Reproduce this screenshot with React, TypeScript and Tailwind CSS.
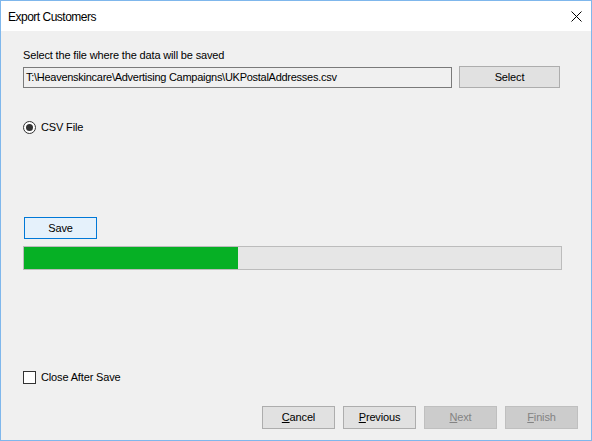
import React from 'react';

const font = { fontFamily: '"Liberation Sans", Arial, sans-serif' };

const WinButton: React.FC<{ label: string; mnemonic?: boolean; disabled?: boolean }> = ({ label, mnemonic, disabled }) => (
  <button
    className={
      disabled
        ? 'w-[73px] h-[23px] border border-[#bfbfbf] bg-[#cccccc] text-[#838383] text-[11px] tracking-[-0.15px] leading-none'
        : 'w-[73px] h-[23px] border border-[#adadad] bg-[#e1e1e1] text-black text-[11px] tracking-[-0.15px] leading-none'
    }
  >
    {mnemonic ? (
      <>
        <u>{label[0]}</u>
        {label.slice(1)}
      </>
    ) : (
      label
    )}
  </button>
);

export default function App() {
  return (
    <div style={font} className="w-[592px] h-[441px] border border-[#7fb7ec] bg-[#f0f0f0] flex flex-col overflow-hidden">
      {/* title bar */}
      <div className="h-[30px] bg-white flex items-center justify-between pl-[7px] pr-[9px]">
        <span className="text-[12px] tracking-[-0.5px] text-black pt-[1px]">Export Customers</span>
        <svg width="11" height="11" viewBox="0 0 11 11">
          <path d="M0.5 0.5 L10.5 10.5 M10.5 0.5 L0.5 10.5" stroke="#000" strokeWidth="1" />
        </svg>
      </div>

      <div className="flex flex-col pl-[22px] pr-[30px] text-[11px] tracking-[-0.15px] text-black">
        <div className="mt-[18px] leading-[13px]">Select the file where the data will be saved</div>

        <div className="mt-[4px] flex items-start gap-[7px]">
          <div className="mt-[1px] w-[429px] h-[21px] border border-[#7a7a7a] bg-[#f0f0f0] flex items-center pl-[2px] leading-none whitespace-nowrap overflow-hidden tracking-[-0.27px]">
            T:\Heavenskincare\Advertising Campaigns\UKPostalAddresses.csv
          </div>
          <button className="w-[101px] h-[22px] border border-[#adadad] bg-[#e1e1e1] leading-none">Select</button>
        </div>

        <div className="mt-[33px] flex items-center gap-[5px]">
          <div className="w-[13px] h-[13px] rounded-full border border-[#333333] bg-white flex items-center justify-center">
            <div className="w-[7px] h-[7px] rounded-full bg-[#333333]" />
          </div>
          <span className="leading-[13px]">CSV File</span>
        </div>

        <button className="mt-[83px] ml-[1px] w-[73px] h-[22px] border border-[#0078d7] bg-[#e5f1fb] leading-none">Save</button>

        <div className="mt-[7px] w-[539px] h-[24px] border border-[#bcbcbc] bg-[#e6e6e6]">
          <div className="w-[214px] h-full bg-[#06b025]" />
        </div>

        <div className="mt-[101px] flex items-center gap-[5px]">
          <div className="w-[13px] h-[13px] border border-[#333333] bg-white" />
          <span className="leading-[13px]">Close After Save</span>
        </div>

        <div className="mt-[22px] flex justify-end gap-[8px] mr-[-17px]">
          <WinButton label="Cancel" mnemonic />
          <WinButton label="Previous" mnemonic />
          <WinButton label="Next" mnemonic disabled />
          <WinButton label="Finish" mnemonic disabled />
        </div>
      </div>
    </div>
  );
}
